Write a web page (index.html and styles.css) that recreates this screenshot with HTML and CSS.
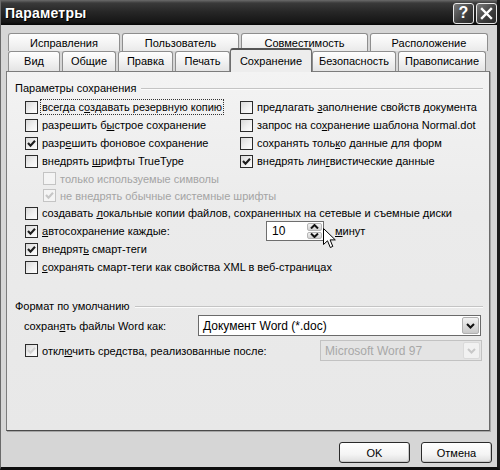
FILE: index.html
```html
<!DOCTYPE html>
<html lang="ru">
<head>
<meta charset="utf-8">
<title>Параметры</title>
<link rel="stylesheet" href="styles.css">
</head>
<body>
<div class="window">
  <div class="titlebar">
    <span class="title">Параметры</span>
    <div class="tbtns">
      <span class="tbtn">?</span>
      <span class="tbtn"><svg width="13" height="13" viewBox="0 0 13 13"><path d="M2 2 L11 11 M11 2 L2 11" stroke="#fff" stroke-width="2.4" stroke-linecap="square"/></svg></span>
    </div>
  </div>
  <div class="content">
    <div class="tabs">
      <div class="tabrow back">
        <span class="tab">Исправления</span>
        <span class="tab">Пользователь</span>
        <span class="tab">Совместимость</span>
        <span class="tab">Расположение</span>
      </div>
      <div class="tabrow front">
        <span class="tab">Вид</span>
        <span class="tab">Общие</span>
        <span class="tab">Правка</span>
        <span class="tab">Печать</span>
        <span class="tab active">Сохранение</span>
        <span class="tab">Безопасность</span>
        <span class="tab">Правописание</span>
      </div>
    </div>
    <div class="panel">
      <div class="legend"><span>Параметры сохранения</span><i class="rule"></i></div>
      <div class="cols">
        <div class="row"><span class="cb"></span><span class="lbl focus">всегда с<u>о</u>здавать резервную копию</span></div>
        <div class="row"><span class="cb"></span><span class="lbl">предлагать <u>з</u>аполнение свойств документа</span></div>
        <div class="row"><span class="cb"></span><span class="lbl">разрешить б<u>ы</u>строе сохранение</span></div>
        <div class="row"><span class="cb"></span><span class="lbl">запрос на со<u>х</u>ранение шаблона Normal.dot</span></div>
        <div class="row"><span class="cb checked"><svg viewBox="0 0 11 11"><path d="M2 5 L4.5 7.8 L9 2.8" /></svg></span><span class="lbl">разр<u>е</u>шить фоновое сохранение</span></div>
        <div class="row"><span class="cb"></span><span class="lbl">сохранять толь<u>к</u>о данные для форм</span></div>
        <div class="row"><span class="cb"></span><span class="lbl">внедрять <u>ш</u>рифты TrueType</span></div>
        <div class="row"><span class="cb checked"><svg viewBox="0 0 11 11"><path d="M2 5 L4.5 7.8 L9 2.8" /></svg></span><span class="lbl">внедрять лин<u>г</u>вистические данные</span></div>
      </div>
      <div class="row sub disabled"><span class="cb"></span><span class="lbl">только используемые символы</span></div>
      <div class="row sub disabled"><span class="cb checked"><svg viewBox="0 0 11 11"><path d="M2 5 L4.5 7.8 L9 2.8" /></svg></span><span class="lbl">не внедрять обычные системные шрифты</span></div>
      <div class="row"><span class="cb"></span><span class="lbl">создавать <u>л</u>окальные копии файлов, сохраненных на сетевые и съемные диски</span></div>
      <div class="row">
        <span class="cb checked"><svg viewBox="0 0 11 11"><path d="M2 5 L4.5 7.8 L9 2.8" /></svg></span><span class="lbl autolbl"><u>а</u>втосохранение каждые:</span>
        <span class="spin">
          <span class="spinval">10</span>
          <span class="spinbtns">
            <span class="sbtn"><svg width="9" height="5" viewBox="0 0 9 5"><path d="M1 4.5 L4.5 1 L8 4.5" /></svg></span>
            <span class="sbtn"><svg width="9" height="5" viewBox="0 0 9 5"><path d="M1 0.5 L4.5 4 L8 0.5" /></svg></span>
          </span>
          <svg class="cursor" width="13" height="21" viewBox="0 0 13 21"><path d="M0.5 0.5 L0.5 16.5 L4.5 12.8 L7.3 19.5 L9.8 18.4 L7.1 11.9 L12.3 11.9 Z" fill="#fff" stroke="#000" stroke-width="1"/></svg>
        </span>
        <span class="lbl unit"><u>м</u>инут</span>
      </div>
      <div class="row"><span class="cb checked"><svg viewBox="0 0 11 11"><path d="M2 5 L4.5 7.8 L9 2.8" /></svg></span><span class="lbl">внедрят<u>ь</u> смарт-теги</span></div>
      <div class="row"><span class="cb"></span><span class="lbl"><u>с</u>охранять смарт-теги как свойства XML в веб-страницах</span></div>

      <div class="legend second"><span>Формат по умолчанию</span><i class="rule"></i></div>
      <div class="frow">
        <span class="flabel">сохран<u>я</u>ть файлы Word как:</span>
        <span class="select wide"><span class="selval">Документ Word (*.doc)</span><span class="dd"><svg width="9" height="6" viewBox="0 0 9 6"><path d="M1 1 L4.5 4.5 L8 1" /></svg></span></span>
      </div>
      <div class="frow second">
        <span class="cb disabledcb"><svg viewBox="0 0 11 11"><path d="M2 5 L4.5 7.8 L9 2.8" /></svg></span><span class="lbl offlbl">откл<u>ю</u>чить средства, реализованные после:</span>
        <span class="select narrow disabled"><span class="selval">Microsoft Word 97</span><span class="dd"><svg width="9" height="6" viewBox="0 0 9 6"><path d="M1 1 L4.5 4.5 L8 1" /></svg></span></span>
      </div>
    </div>
    <div class="buttons">
      <span class="btn">OK</span>
      <span class="btn">Отмена</span>
    </div>
  </div>
</div>
</body>
</html>
```
FILE: styles.css
```css
* { box-sizing: border-box; }
html, body { margin: 0; padding: 0; }
body {
  width: 500px;
  height: 470px;
  overflow: hidden;
  font: 11px "Liberation Sans", Arial, sans-serif;
  color: #000;
  background: #000;
}
u { text-decoration: underline; text-underline-offset: 1px; }

.window {
  width: 500px;
  height: 470px;
  display: flex;
  flex-direction: column;
  background: #d6d6d6;
  border-right: 3px solid #1b1b1b;
  border-bottom: 3px solid #0e0e0e;
  border-left: 1px solid #6a6a6a;
}

.titlebar {
  height: 25px;
  flex: none;
  display: flex;
  align-items: center;
  justify-content: space-between;
  padding-left: 4px;
  background: linear-gradient(#6b6b6b 0, #3a3a3a 3px, #262626 12px, #161616 22px, #050505 25px);
}
.title {
  color: #fff;
  font-weight: bold;
  font-size: 14px;
  letter-spacing: 0.2px;
  text-shadow: 1px 1px 0 #000;
}
.tbtns { display: flex; gap: 2px; margin-top: 1px; }
.tbtn {
  width: 21px;
  height: 21px;
  border: 1px solid #e8e8e8;
  border-radius: 3px;
  background: linear-gradient(135deg, #7a7a7a, #3c3c3c 60%, #2a2a2a);
  color: #fff;
  font: bold 16px "Liberation Sans", Arial, sans-serif;
  display: flex;
  align-items: center;
  justify-content: center;
}

.content {
  flex: 1;
  display: flex;
  flex-direction: column;
  padding: 8px 6px 0 5px;
}

.tabs { display: flex; flex-direction: column; padding-left: 2px; }
.tabrow { display: flex; gap: 2px; }
.tabrow.back { height: 18px; overflow: hidden; }
.tabrow.front { height: 20px; position: relative; z-index: 2; }
.tab {
  height: 22px;
  border: 1px solid #8e8e8e;
  border-bottom: none;
  border-radius: 3px 3px 0 0;
  background: linear-gradient(#fefefe, #f2f2f2 50%, #e4e4e4);
  text-align: center;
  line-height: 18px;
  white-space: nowrap;
}
.tabrow.front .tab { height: 20px; line-height: 19px; }
.back .tab:nth-child(1) { width: 112px; }
.back .tab:nth-child(2) { width: 117px; }
.back .tab:nth-child(3) { width: 127px; }
.back .tab:nth-child(4) { width: 118px; }
.front .tab:nth-child(1) { width: 52px; }
.front .tab:nth-child(2) { width: 54px; }
.front .tab:nth-child(3) { width: 55px; }
.front .tab:nth-child(4) { width: 55px; }
.front .tab:nth-child(6) { width: 84px; }
.front .tab:nth-child(7) { width: 88px; }
.tabrow.front .tab.active {
  width: 82px;
  height: 24px;
  margin: -3px -2px -1px;
  line-height: 22px;
  border-color: #6e6e6e;
  border-top: 2px solid #555;
  background: #ededed;
  position: relative;
}

.panel {
  width: 484px;
  height: 360px;
  border: 1px solid #7c7c7c;
  border-right-color: #6a6a6a;
  border-bottom-color: #4a4a4a;
  box-shadow: 1px 1px 0 #a6a6a6;
  background: linear-gradient(#f3f3f3, #ebebeb 40%, #e8e8e8);
  padding: 10px 6px 0 8px;
  display: flex;
  flex-direction: column;
}

.legend {
  display: flex;
  align-items: center;
  height: 12px;
  line-height: 12px;
  margin-bottom: 4px;
}
.legend .rule {
  flex: 1;
  margin-left: 5px;
  border-top: 1px solid #c4c4c4;
  border-bottom: 1px solid #fbfbfb;
  margin-top: 2px;
}
.legend.second { margin-top: 24px; margin-bottom: 3px; }

.cols {
  display: grid;
  grid-template-columns: 225px 1fr;
}
.row {
  height: 18px;
  display: flex;
  align-items: center;
  padding-left: 10px;
  white-space: nowrap;
}
.cols .row:nth-child(even) { padding-left: 0; }
.row.sub { padding-left: 28px; height: 17px; }

.cb {
  width: 13px;
  height: 13px;
  flex: none;
  border: 1px solid #2b2b2b;
  background: linear-gradient(135deg, #d9d9d9, #f0f0f0 55%, #fdfdfd);
  display: flex;
  align-items: center;
  justify-content: center;
  margin-right: 3px;
}
.cb svg { width: 11px; height: 11px; display: none; }
.cb.checked svg, .cb.disabledcb svg { display: block; }
.cb path { fill: none; stroke: #1e1e1e; stroke-width: 2.1; }
.lbl { padding: 0 1px; line-height: 14px; }
.lbl.focus { outline: 1px dotted #333; outline-offset: 0; }

.disabled .cb { border-color: #c4c4c4; background: #f4f4f4; }
.disabled .cb path { stroke: #c6c6c6; }
.disabled .lbl { color: #a4a4a4; }
.cb.disabledcb { border-color: #2b2b2b; }
.cb.disabledcb path { stroke: #d2d2d2; }

.autolbl { width: 225px; }
.spin {
  position: relative;
  width: 58px;
  height: 20px;
  border: 1px solid #6e6e6e;
  background: #fff;
  display: flex;
  align-items: center;
  justify-content: space-between;
  padding: 1px;
}
.spinval { padding-left: 4px; font-size: 12px; }
.spinbtns { display: flex; flex-direction: column; gap: 1px; height: 100%; }
.sbtn {
  width: 15px;
  flex: 1;
  border: 1px solid #b6b6b6;
  border-radius: 2px;
  background: linear-gradient(#f4f4f4, #cfcfcf);
  display: flex;
  align-items: center;
  justify-content: center;
}
.sbtn path, .dd path { fill: none; stroke: #111; stroke-width: 2; }
.cursor { position: absolute; left: 56px; top: 6px; }
.unit { margin-left: 10px; }

.frow {
  display: flex;
  align-items: center;
  height: 21px;
  padding-left: 9px;
  white-space: nowrap;
}
.frow.second { margin-top: 4px; padding-left: 10px; }
.flabel { width: 174px; }
.offlbl { width: 279px; }
.select {
  height: 21px;
  border: 1px solid #6a6a6a;
  background: #fff;
  display: flex;
  align-items: center;
  justify-content: space-between;
  padding: 1px;
}
.select.wide { width: 283px; }
.select.narrow { width: 162px; }
.selval { padding-left: 3px; font-size: 12px; }
.dd {
  width: 17px;
  height: 17px;
  border: 1px solid #b0b0b0;
  border-radius: 2px;
  background: linear-gradient(#f2f2f2, #c8c8c8);
  display: flex;
  align-items: center;
  justify-content: center;
}
.select.disabled { border-color: #c2c2c2; background: #e4e4e4; }
.select.disabled .selval { color: #a8a8a8; }
.select.disabled .dd { border-color: #dadada; background: #f1f1f1; }
.select.disabled .dd path { stroke: #c8c8c8; }

.buttons {
  display: flex;
  justify-content: flex-end;
  gap: 11px;
  margin-top: 11px;
  margin-right: -1px;
}
.btn {
  width: 71px;
  height: 21px;
  border: 1px solid #2a2a2a;
  border-radius: 3px;
  background: linear-gradient(#ffffff, #f4f4f4 60%, #dedede);
  box-shadow: inset -1px -1px 0 #c8c8c8;
  display: flex;
  align-items: center;
  justify-content: center;
}
```
